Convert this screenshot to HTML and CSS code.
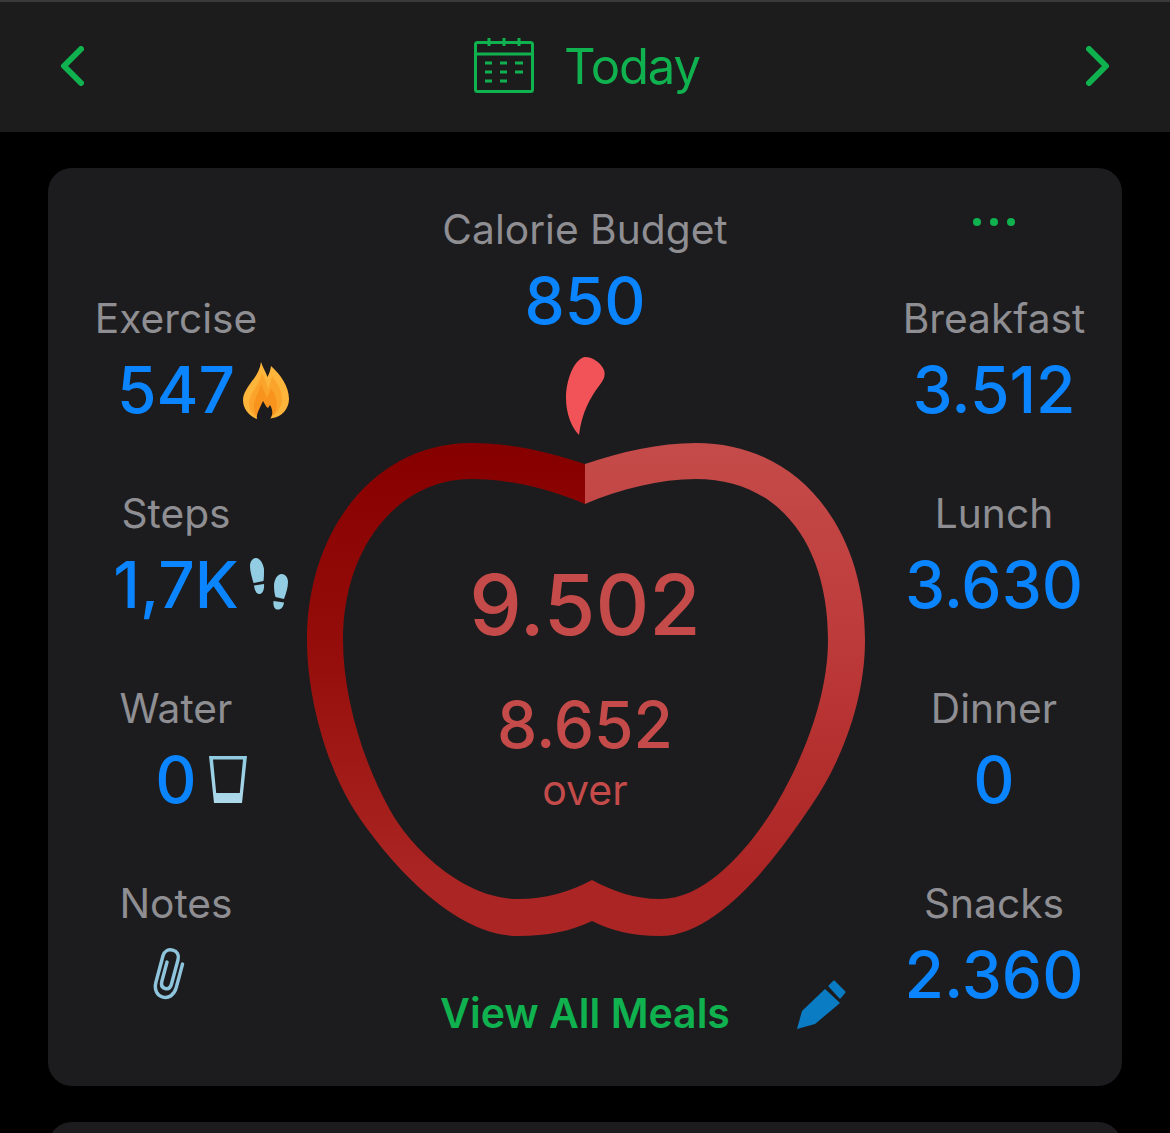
FILE: index.html
```html
<!DOCTYPE html>
<html lang="en">
<head>
<meta charset="utf-8">
<title>Today</title>
<link rel="stylesheet" href="styles.css">
</head>
<body>
<div class="screen">
  <header class="topbar">
    <svg class="chevron" viewBox="0 0 24 40"><path d="M21 3 4 20l17 17"/></svg>
    <div class="title">
      <svg class="calendar" viewBox="0 0 60 55">
        <rect class="cal-line" x="1.5" y="4.5" width="57" height="49" rx="2"/>
        <path class="cal-line" d="M1.500 16h57M15 0v8M30 0v8M45 0v8"/>
        <path class="cal-dash" d="M11 25h7M26 25h7M41 25h8M11 34h7M26 34h7M41 34h8M11 43h7M26 43h7"/>
      </svg>
      <span class="title-text">Today</span>
    </div>
    <svg class="chevron" viewBox="0 0 24 40"><path d="M3 3l17 17L3 37"/></svg>
  </header>

  <main class="card">
    <section class="side side-left">
      <div class="stat">
        <div class="label">Exercise</div>
        <div class="value"><span class="num">547<svg class="badge flame" viewBox="0 0 46 57">
          <path fill="#fdb53c" d="M18 0C20 6 23 10 24.500 15 26 12 27.500 8 28 4 37 12 46 24 46 37 46 47 38 55 30 56L24 57 14 57C6 54 0 47 0 38 0 31 5 25 9 19 13 14 17 8 18 0Z"/>
          <path fill="#fba42c" d="M19 11C22 18 24 22 25 27 27 23 28 18 29 14 35 22 40 30 39 39 38 47 33 52 28 55L15 56C9 52 5 46 6 39 8 30 16 23 19 11Z"/>
          <path fill="#f8931e" d="M18 22C20 27 22 31 24 36 26 33 27 29 28 26 33 33 35 41 33 48 31 53 28 55 24 56H16C12 52 10 47 11 42 12 35 16 30 18 22Z"/>
          <path fill="#1c1c1e" d="M20 39C22 42 23 45 25 46L27 43C30 48 30 53 27 57H14C13 52 17 46 20 39Z"/>
        </svg></span></div>
      </div>
      <div class="stat">
        <div class="label">Steps</div>
        <div class="value"><span class="num">1,7K<svg class="badge steps" viewBox="0 0 40 52">
          <g fill="#93cde3">
            <path d="M1 8C1 3 4 0 7 0 11 0 14 5 15 11 15 16 15 20 14.500 23L4.500 25C3 19 1 14 1 8Z"/>
            <path d="M5 27.500 15 26C15.500 31 14 35.500 10.500 36 7.500 36.500 5.500 32 5 27.500Z"/>
            <path d="M39 24C39 19 36 16 32.500 16 28.500 16 25.500 21 25 27 25 32 25.500 36 26.500 39L35 41C37 35 39 30 39 24Z"/>
            <path d="M24.500 43 35 44.500C34.500 49 32 52 28 51.500 25 51 24 47 24.500 43Z"/>
          </g>
        </svg></span></div>
      </div>
      <div class="stat">
        <div class="label">Water</div>
        <div class="value"><span class="num">0<svg class="badge glass" viewBox="0 0 38 49">
          <defs>
            <linearGradient id="glassFill" x1="0" y1="0" x2="0" y2="1">
              <stop offset="0" stop-color="#8fcbe2"/>
              <stop offset="1" stop-color="#aed9ea"/>
            </linearGradient>
          </defs>
          <path fill="url(#glassFill)" d="M0 1H38L33 48H5ZM4 4.500 7.200 38H30.800L34 4.500Z" fill-rule="evenodd"/>
        </svg></span></div>
      </div>
      <div class="stat">
        <div class="label">Notes</div>
        <div class="value value-icon">
          <svg class="clip" viewBox="0 0 34 54">
            <path transform="rotate(15 17 27)" d="M27.500 14V38C27.500 46 23 51 17 51 11 51 6.500 46 6.500 38V11C6.500 6 10 3 14.500 3 19 3 22 6 22 11V36C22 40 20 42 17 42 14 42 12 40 12 36V16"/>
          </svg>
        </div>
      </div>
    </section>

    <section class="center">
      <div class="label">Calorie Budget</div>
      <div class="value">850</div>
      <div class="apple">
        <svg class="apple-art" viewBox="304 350 562 590">
          <defs>
            <linearGradient id="appleLeft" gradientUnits="userSpaceOnUse" x1="0" y1="450" x2="0" y2="880">
              <stop offset="0" stop-color="#870000"/>
              <stop offset="0.45" stop-color="#950d0a"/>
              <stop offset="1" stop-color="#aa2523"/>
            </linearGradient>
            <linearGradient id="appleRight" gradientUnits="userSpaceOnUse" x1="0" y1="450" x2="0" y2="880">
              <stop offset="0" stop-color="#c44b49"/>
              <stop offset="0.45" stop-color="#bd3a3a"/>
              <stop offset="1" stop-color="#aa2523"/>
            </linearGradient>
          </defs>
          <path fill="#f25358" d="M585 357C593 357 601 363 604 370 606 376 603 381 599 386 590 398 582 412 579 435 572 428 566 414 566 398 566 380 574 359 585 357Z"/>
          <path fill="url(#appleLeft)" d="M585 464C552 453 512 443 471 443 375 443 307 530 307 640 307 695 325 760 350 803 372 840 445 936 518 936 548 936 571 931 592 921V880C570 892 545 899 518 899 465 899 412 850 390 810 362 760 343 695 343 640 343 545 400 479 471 479 512 479 552 490 585 504Z"/>
          <path fill="url(#appleRight)" d="M585 464C620 452 660 443 696 443 800 443 865 530 865 640 865 700 842 760 813 803 790 837 725 936 660 936 632 936 610 930 592 921V880C612 891 635 899 660 899 710 899 755 840 777 803 805 755 828 695 828 640 828 545 780 479 696 479 660 479 620 489 585 504Z"/>
        </svg>
        <div class="apple-text">
          <div class="eaten">9.502</div>
          <div class="remaining">8.652</div>
          <div class="over">over</div>
        </div>
      </div>
      <div class="meals">
        <span class="meals-link">View All Meals</span>
        <svg class="pencil" viewBox="0 0 49 49">
          <path d="M28 9 43 23 18 44 0 49 5 31Z"/>
          <path d="M32.500 6 37 1.500 47.500 12 43 17.500Z" stroke="#0a7cc4" stroke-width="2" stroke-linejoin="round"/>
        </svg>
      </div>
    </section>

    <section class="side side-right">
      <div class="dots"><i></i><i></i><i></i></div>
      <div class="stat"><div class="label">Breakfast</div><div class="value">3.512</div></div>
      <div class="stat"><div class="label">Lunch</div><div class="value">3.630</div></div>
      <div class="stat"><div class="label">Dinner</div><div class="value">0</div></div>
      <div class="stat"><div class="label">Snacks</div><div class="value">2.360</div></div>
    </section>
  </main>

  <div class="next-card"></div>
</div>
</body>
</html>
```

FILE: styles.css
```css
* { box-sizing: border-box; }

html, body {
  margin: 0;
  background: #000;
}

.screen {
  height: 1133px;
  overflow: hidden;
  font-family: Inter, "Liberation Sans", sans-serif;
}

.topbar {
  height: 132px;
  background: #1c1c1c;
  border-top: 2px solid #3a3a3c;
  padding: 0 60px;
  display: flex;
  align-items: center;
  justify-content: space-between;
}

.chevron {
  width: 24px;
  height: 40px;
  margin-top: -2px;
  fill: none;
  stroke: #10b14f;
  stroke-width: 6;
  stroke-linecap: round;
  stroke-linejoin: round;
}

.title {
  display: flex;
  align-items: center;
  gap: 30px;
  margin-left: 4px;
}

.calendar {
  width: 60px;
  height: 55px;
  margin-top: -3px;
  fill: none;
}

.cal-line {
  stroke: #10b14f;
  stroke-width: 3;
}

.cal-dash {
  stroke: #10b14f;
  stroke-width: 3;
}

.title-text {
  color: #10b14f;
  font-size: 49px;
  line-height: 60px;
  letter-spacing: -1.1px;
}

.card {
  margin: 36px 48px 0;
  height: 918px;
  background: #1c1c1e;
  border-radius: 24px;
  padding-top: 38px;
  display: grid;
  grid-template-columns: 256px 562px 256px;
}

.label {
  color: #8e8e93;
  font-size: 40.7px;
  line-height: 48px;
  text-align: center;
  white-space: nowrap;
}

.value {
  margin-top: 7px;
  color: #0a84ff;
  font-size: 64px;
  font-weight: 500;
  line-height: 80px;
  text-align: center;
  white-space: nowrap;
}

.side {
  display: flex;
  flex-direction: column;
  gap: 60px;
}

.side-left {
  padding-top: 89px;
}

.dots {
  height: 32px;
  margin-bottom: -3px;
  display: flex;
  align-items: center;
  justify-content: center;
  gap: 9px;
}

.dots i {
  width: 8px;
  height: 8px;
  border-radius: 50%;
  background: #10b14f;
}

.num {
  position: relative;
  display: inline-block;
}

.badge {
  position: absolute;
}

.flame {
  left: calc(100% + 8px);
  top: 12px;
  width: 46px;
  height: 57px;
}

.steps {
  left: calc(100% + 10px);
  top: 13px;
  width: 40px;
  height: 52px;
}

.glass {
  left: calc(100% + 12px);
  top: 15px;
  width: 38px;
  height: 49px;
}

.value-icon {
  height: 80px;
  display: flex;
  justify-content: center;
  padding: 12px 14px 0 0;
}

.clip {
  width: 34px;
  height: 54px;
  fill: none;
  stroke: #8ec5dc;
  stroke-width: 3.5;
  stroke-linecap: round;
  stroke-linejoin: round;
}

.center {
  display: flex;
  flex-direction: column;
}

.apple {
  position: relative;
  margin-top: 9px;
  height: 590px;
}

.apple-art {
  display: block;
  width: 562px;
  height: 590px;
}

.apple-text {
  position: absolute;
  inset: 0;
  padding-top: 205px;
  text-align: center;
  color: #c44b49;
}

.eaten {
  font-size: 83.5px;
  font-weight: 500;
  line-height: 100px;
}

.remaining {
  margin-top: 35px;
  font-size: 64px;
  font-weight: 500;
  line-height: 70px;
}

.over {
  margin-top: 5px;
  font-size: 41px;
  line-height: 50px;
}

.meals {
  position: relative;
  margin-top: 49px;
  height: 48px;
  text-align: center;
}

.meals-link {
  color: #10b14f;
  font-size: 41px;
  font-weight: 600;
  line-height: 48px;
}

.pencil {
  position: absolute;
  left: 493px;
  top: -9px;
  width: 49px;
  height: 49px;
  fill: #0a7cc4;
}

.next-card {
  margin: 36px 48px 0;
  height: 40px;
  background: #1c1c1e;
  border-radius: 24px 24px 0 0;
}
```
